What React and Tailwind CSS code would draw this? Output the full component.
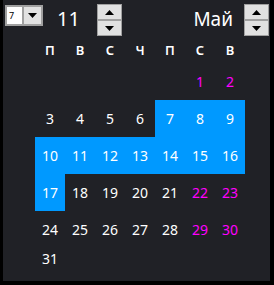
import React from "react";

const weekdays = ["П", "В", "С", "Ч", "П", "С", "В"];

const rows = [
  [null, null, null, null, null, 1, 2],
  [3, 4, 5, 6, 7, 8, 9],
  [10, 11, 12, 13, 14, 15, 16],
  [17, 18, 19, 20, 21, 22, 23],
  [24, 25, 26, 27, 28, 29, 30],
  [31, null, null, null, null, null, null],
];

const selected = [7, 8, 9, 10, 11, 12, 13, 14, 15, 16, 17];

const Spinner = () => (
  <div className="flex flex-col w-[25px] h-[32px] border border-[#a0a0a0] bg-[#e1e1e1]">
    <div className="flex-1 flex items-center justify-center border-b-2 border-[#a0a0a0]">
      <svg width="9" height="5" viewBox="0 0 9 5">
        <path d="M0 5 L4.5 0 L9 5 Z" fill="#000" />
      </svg>
    </div>
    <div className="flex-1 flex items-center justify-center">
      <svg width="9" height="5" viewBox="0 0 9 5">
        <path d="M0 0 L4.5 5 L9 0 Z" fill="#000" />
      </svg>
    </div>
  </div>
);

export default function App() {
  return (
    <div className="w-[274px] h-[285px] bg-black font-['Noto_Sans',sans-serif]">
      <div className="ml-[3px] w-[267px] h-[281px] bg-[#202126] flex flex-col">
        {/* шапка */}
        <div className="h-[40px] flex items-start">
          <div className="mt-[5px] ml-[2px] flex w-[38px] h-[21px] border-2 border-[#a0a0a0] bg-white">
            <div className="w-[15px] flex items-center pl-[2px] text-[9px] text-black leading-none">
              7
            </div>
            <div className="flex-1 bg-[#e1e1e1] border-l-2 border-[#a0a0a0] flex items-center justify-center">
              <svg width="9" height="5" viewBox="0 0 9 5">
                <path d="M0 0 L4.5 5 L9 0 Z" fill="#000" />
              </svg>
            </div>
          </div>
          <div className="ml-[14px] mt-[7px] w-[40px] text-[20px] leading-[24px] text-white">
            11
          </div>
          <div className="mt-[4px]">
            <Spinner />
          </div>
          <div className="flex-1 mt-[7px] pr-[11px] text-right text-[19px] leading-[24px] text-white">
            Май
          </div>
          <div className="mt-[4px] mr-[1px]">
            <Spinner />
          </div>
        </div>

        {/* дни недели */}
        <div className="ml-[32px] h-[23px] grid grid-cols-[repeat(7,30px)] items-center">
          {weekdays.map((d, i) => (
            <div key={i} className="text-center text-[13px] font-semibold text-white leading-none pb-[3px]">
              {d}
            </div>
          ))}
        </div>

        {/* числа */}
        <div className="ml-[32px] flex flex-col">
          {rows.map((row, r) => (
            <div
              key={r}
              className={`grid grid-cols-[repeat(7,30px)] ${r === 5 ? "h-[18px]" : "h-[37px]"}`}
            >
              {row.map((n, c) => {
                const isSel = n && selected.includes(n);
                const weekend = c >= 5;
                return (
                  <div
                    key={c}
                    className={`flex items-center justify-center text-[14px] ${isSel ? "bg-[#0099ff] text-white" : weekend ? "text-[#ff00ff]" : "text-white"}`}
                  >
                    {n}
                  </div>
                );
              })}
            </div>
          ))}
        </div>
      </div>
    </div>
  );
}
